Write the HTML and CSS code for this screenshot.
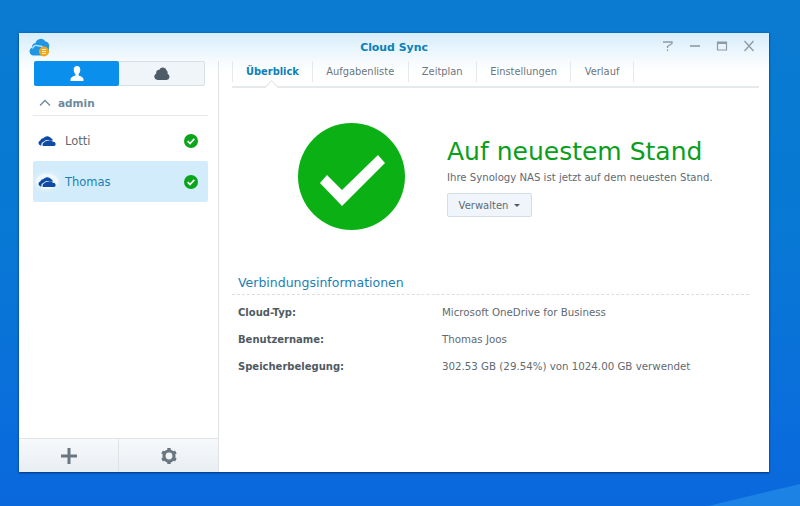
FILE: index.html
```html
<!DOCTYPE html>
<html lang="de">
<head>
<meta charset="utf-8">
<title>Cloud Sync</title>
<link rel="stylesheet" href="styles.css">
</head>
<body>
<svg class="desk-light" viewBox="0 0 800 506" aria-hidden="true"><path d="M708 506 L800 484 V506 Z" fill="#1c82e4"/></svg>
<div class="window">
  <header class="titlebar">
    <svg class="app-icon" viewBox="0 0 21 21" aria-hidden="true">
      <path d="M4.500 18.500a4.200 4.200 0 0 1-1.500-8A4 4 0 0 1 6.500 6 5.500 5.500 0 0 1 16.500 4.500 4.200 4.200 0 0 1 20 10v5l-4 3.500z" fill="#1e96e4"/>
      <path d="M3.500 11.500a4 4 0 0 1 6-2.500a4 4 0 0 1 5 3" fill="none" stroke="#bfe6fa" stroke-width="1.300"/>
      <circle cx="15" cy="14.500" r="5" fill="#f0a91e"/>
      <path d="M13 14.500h4M13 12.500h4M13 16.500h4" stroke="#fff2c8" stroke-width=".9"/>
    </svg>
    <h1 class="title">Cloud Sync</h1>
    <div class="controls">
      <svg viewBox="0 0 14 12" aria-hidden="true"><path d="M2 2h9v1.500L6.500 6.500V8M6.500 9.500v1.500" fill="none" stroke="#8f9aa5" stroke-width="1.300"/></svg>
      <svg viewBox="0 0 14 12" aria-hidden="true"><path d="M2 6h10" stroke="#8f9aa5" stroke-width="1.600"/></svg>
      <svg viewBox="0 0 14 12" aria-hidden="true"><path d="M2.500 2h9v8h-9z" fill="none" stroke="#8f9aa5" stroke-width="1.200"/><path d="M2.500 3h9" stroke="#8f9aa5" stroke-width="2"/></svg>
      <svg viewBox="0 0 14 12" aria-hidden="true"><path d="M2.500 1l9 10M11.500 1l-9 10" stroke="#8f9aa5" stroke-width="1.300"/></svg>
    </div>
  </header>
  <div class="body">
    <aside class="sidebar">
      <div class="side-top">
        <div class="segment">
          <div class="seg seg-on">
            <svg class="seg-icon" viewBox="0 0 16 15" aria-hidden="true"><path d="M8 0c2.200 0 3.300 1.500 3.300 3.700 0 1.700-.7 3.500-1.700 4.400v1.500c2 .8 4.400 1.400 4.900 3.400V15h-13v-2c.5-2 2.900-2.600 4.900-3.400V8.100C5.400 7.200 4.700 5.400 4.700 3.700 4.700 1.500 5.800 0 8 0z" fill="#fff"/></svg>
          </div>
          <div class="seg">
            <svg class="seg-icon" viewBox="0 0 16 15" aria-hidden="true"><path d="M3.500 14a3.400 3.400 0 0 1-1.200-6.500A3 3 0 0 1 5.300 3.700 4 4 0 0 1 12.700 4.500 3 3 0 0 1 13.500 7.700 3.300 3.300 0 0 1 12.500 14z" fill="#4f5c68"/></svg>
          </div>
        </div>
        <div class="group">
          <svg class="chevron" viewBox="0 0 12 8" aria-hidden="true"><path d="M1 6.500 6 1.500l5 5" fill="none" stroke="#6d8a9e" stroke-width="1.300"/></svg>
          <span>admin</span>
        </div>
        <ul class="accounts">
          <li class="account">
            <span class="od-wrap"><svg class="od" viewBox="0 0 18 11" aria-hidden="true"><path d="M2.500 10.500a2.600 2.600 0 0 1-.3-5A4 4 0 0 1 5.500 3 5 5 0 0 1 13.500 3.500 3 3 0 0 1 15 5.500H11A4 4 0 0 0 5.800 6.800 3 3 0 0 0 3.500 10.500z" fill="#0f4aa5"/><path d="M5 11a2.300 2.300 0 0 1 1-3.500 4.200 4.200 0 0 1 4.500-1.500 3 3 0 0 1 4.500 .9A2 2 0 0 1 16 11z" fill="#0f4aa5"/></svg></span>
            <span class="name">Lotti</span>
            <svg class="ok" viewBox="0 0 14 14" aria-hidden="true"><circle cx="7" cy="7" r="7" fill="#0aa51a"/><path d="M3.700 7.200 6 9.500l4.300-4.600" fill="none" stroke="#fff" stroke-width="1.700"/></svg>
          </li>
          <li class="account account-on">
            <span class="od-wrap od-halo"><svg class="od" viewBox="0 0 18 11" aria-hidden="true"><path d="M2.500 10.500a2.600 2.600 0 0 1-.3-5A4 4 0 0 1 5.500 3 5 5 0 0 1 13.500 3.500 3 3 0 0 1 15 5.500H11A4 4 0 0 0 5.800 6.800 3 3 0 0 0 3.500 10.500z" fill="#0f4aa5"/><path d="M5 11a2.300 2.300 0 0 1 1-3.500 4.200 4.200 0 0 1 4.500-1.500 3 3 0 0 1 4.500 .9A2 2 0 0 1 16 11z" fill="#0f4aa5"/></svg></span>
            <span class="name">Thomas</span>
            <svg class="ok" viewBox="0 0 14 14" aria-hidden="true"><circle cx="7" cy="7" r="7" fill="#0aa51a"/><path d="M3.700 7.200 6 9.500l4.300-4.600" fill="none" stroke="#fff" stroke-width="1.700"/></svg>
          </li>
        </ul>
      </div>
      <footer class="side-foot">
        <div class="foot-btn">
          <svg viewBox="0 0 18 18" aria-hidden="true"><path d="M9 1v16M1 9h16" stroke="#6b7680" stroke-width="3"/></svg>
        </div>
        <div class="foot-btn">
          <svg viewBox="0 0 18 18" aria-hidden="true"><circle cx="9" cy="9" r="5" fill="none" stroke="#6b7680" stroke-width="3.200"/><path d="M9 1v3M9 14v3M2.100 5l2.600 1.500M13.300 11.500l2.600 1.500M2.100 13l2.600-1.500M13.300 6.500 15.900 5" stroke="#6b7680" stroke-width="3.400"/></svg>
        </div>
      </footer>
    </aside>
    <main class="main">
      <nav class="tabs">
        <a class="tab tab-on">Überblick</a>
        <a class="tab">Aufgabenliste</a>
        <a class="tab">Zeitplan</a>
        <a class="tab">Einstellungen</a>
        <a class="tab">Verlauf</a>
      </nav>
      <section class="status">
        <svg class="big-ok" viewBox="0 0 107 107" aria-hidden="true"><circle cx="53.500" cy="53.500" r="53.500" fill="#0bb014"/><path d="M22 60 44 83 87 40 80 32 44 67 29 52z" fill="#fff"/></svg>
        <div class="status-text">
          <h2 class="headline">Auf neuestem Stand</h2>
          <p class="sub">Ihre Synology NAS ist jetzt auf dem neuesten Stand.</p>
          <button class="manage">Verwalten<span class="caret"></span></button>
        </div>
      </section>
      <section class="info">
        <h3 class="info-title">Verbindungsinformationen</h3>
        <dl class="info-grid">
          <dt>Cloud-Typ:</dt><dd>Microsoft OneDrive for Business</dd>
          <dt>Benutzername:</dt><dd>Thomas Joos</dd>
          <dt>Speicherbelegung:</dt><dd>302.53 GB (29.54%) von 1024.00 GB verwendet</dd>
        </dl>
      </section>
    </main>
  </div>
</div>
</body>
</html>
```
FILE: styles.css
```css
* { box-sizing: border-box; }
html, body { height: 100%; }
body {
  margin: 0;
  overflow: hidden;
  position: relative;
  font-family: "DejaVu Sans", sans-serif;
  background: linear-gradient(180deg, #0a7bd0 0%, #0879d4 45%, #0a6ddc 85%, #0a68dc 100%);
}
.desk-light { position: absolute; inset: 0; width: 800px; height: 506px; }
.window {
  position: absolute;
  left: 19px;
  top: 33px;
  width: 750px;
  height: 439px;
  display: flex;
  flex-direction: column;
  background: linear-gradient(180deg, #d6edfb 0, #f6fbfe 28px, #fff 40px);
  box-shadow: 0 1px 2px rgba(0, 40, 100, .75), 0 0 2px rgba(0, 50, 110, .35);
}
.titlebar {
  height: 28px;
  flex: none;
  display: flex;
  align-items: center;
  justify-content: center;
  position: relative;
}
.app-icon { position: absolute; left: 10px; top: 4px; width: 21px; height: 21px; }
.title { margin: 0; font-size: 10.900px; font-weight: 700; color: #0a80ba; }
.controls {
  position: absolute;
  right: 13px;
  top: 7px;
  display: flex;
  gap: 13px;
}
.controls svg { width: 14px; height: 12px; display: block; }
.body { flex: 1; min-height: 0; display: flex; }
.sidebar {
  width: 200px;
  flex: none;
  display: flex;
  flex-direction: column;
  border-right: 1px solid #dfe3e6;
}
.side-top { flex: 1; padding: 0 10px 0 14px; }
.segment {
  margin: 0 3px 0 1px;
  height: 25px;
  display: flex;
  background: #f0f5f9;
  border: 1px solid #d8e0e6;
  border-radius: 2px;
}
.seg { flex: 1; display: flex; align-items: center; justify-content: center; }
.seg-on { margin: -1px 0 -1px -1px; background: #0b8fec; border-radius: 2px; }
.seg-icon { width: 16px; height: 15px; display: block; }
.group {
  margin-top: 5px;
  height: 25px;
  padding-left: 6px;
  display: flex;
  align-items: center;
  gap: 7px;
  border-bottom: 1px solid #e6e9eb;
  font-size: 10.500px;
  font-weight: 700;
  color: #6d8a9e;
}
.chevron { width: 12px; height: 8px; display: block; }
.accounts { list-style: none; margin: 0; padding: 4px 0 0; }
.account {
  height: 41px;
  display: flex;
  align-items: center;
  padding: 0 10px 0 5px;
  font-size: 11.500px;
  color: #5f6a72;
  border-radius: 2px;
}
.account-on { background: #d3ecfb; color: #1a80b4; }
.account .name { flex: 1; margin-left: 9px; }
.od-wrap { display: flex; align-items: center; justify-content: center; width: 18px; margin-bottom: 1px; }
.od { width: 18px; height: 11px; display: block; flex: none; }
.od-halo { border-radius: 50%; box-shadow: 0 0 0 2px rgba(255, 255, 255, .55), 0 0 4px 3px rgba(255, 255, 255, .5); background: rgba(255, 255, 255, .6); }
.ok { width: 14px; height: 14px; display: block; }
.side-foot {
  height: 34px;
  flex: none;
  display: flex;
  border-top: 1px solid #e0e4e7;
  background: linear-gradient(180deg, #f7f9fb, #e9eef3);
}
.foot-btn { flex: 1; display: flex; align-items: center; justify-content: center; }
.foot-btn + .foot-btn { border-left: 1px solid #dfe3e6; }
.foot-btn svg { width: 18px; height: 18px; display: block; }
.main { flex: 1; min-width: 0; padding: 0 10px 0 13px; }
.tabs {
  height: 27px;
  display: flex;
  border-bottom: 2px solid #e6e9eb;
  padding-bottom: 4px;
  position: relative;
}
.tab {
  display: flex;
  align-items: center;
  padding: 0 13.300px;
  font-size: 9.900px;
  color: #6b7680;
  border-right: 1px solid #e6e9eb;
}
.tab-on { padding: 0 13px 0 13px; color: #0a80ba; font-weight: 700; border-left: 1px solid #e6e9eb; }
.tab-on::after {
  content: "";
  position: absolute;
  left: 35px;
  bottom: -5px;
  width: 8px;
  height: 8px;
  background: #fff;
  border-top: 1px solid #e0e3e6;
  border-left: 1px solid #e0e3e6;
  transform: rotate(45deg);
}
.status { display: flex; align-items: flex-start; padding: 35px 0 0 66px; }
.big-ok { width: 107px; height: 107px; display: block; flex: none; }
.status-text { margin-left: 42px; padding-top: 12px; }
.headline { margin: 0; font-size: 25px; line-height: 33px; font-weight: 400; color: #0a9e1c; }
.sub { margin: 2px 0 0; font-size: 10.150px; line-height: 15px; color: #5f6a72; }
.manage {
  margin-top: 8px;
  width: 85px;
  height: 24px;
  padding: 0;
  font: 10px "DejaVu Sans", sans-serif;
  color: #5f6a72;
  background: #eff5fa;
  border: 1px solid #d5dee5;
  border-radius: 2px;
  display: flex;
  align-items: center;
  justify-content: center;
  gap: 6px;
}
.caret {
  width: 0;
  height: 0;
  border-left: 3px solid transparent;
  border-right: 3px solid transparent;
  border-top: 3px solid #4f5c68;
}
.info { margin-top: 43px; margin-right: 10px; }
.info-title {
  margin: 0;
  padding: 0 0 3px 6px;
  height: 22px;
  font-size: 12.500px;
  line-height: 20px;
  font-weight: 400;
  color: #1a80b4;
  border-bottom: 1px dashed #dcdfe1;
}
.info-grid {
  margin: 3px 0 0;
  padding-left: 6px;
  display: grid;
  grid-template-columns: 204px 1fr;
  grid-auto-rows: 27px;
  align-items: center;
  font-size: 10.250px;
  color: #5f6a72;
}
.info-grid dt { padding-top: 1px; font-size: 10px; font-weight: 700; color: #4f5a62; }
.info-grid dd { margin: 0; }
```
